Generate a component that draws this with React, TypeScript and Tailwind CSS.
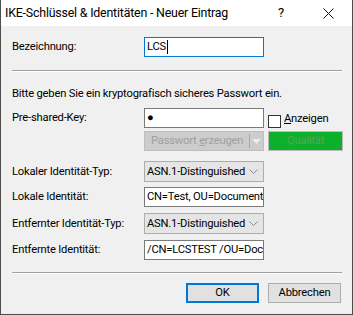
const Label = ({ children }: { children: React.ReactNode }) => (
  <div className="w-[132px] shrink-0">{children}</div>
);

const TextBox = ({ value, focused, cursor }: { value: string; focused?: boolean; cursor?: boolean }) => (
  <div
    className={
      "w-[120px] h-[20px] bg-white flex items-center px-[2px] overflow-hidden whitespace-nowrap " +
      (focused ? "border border-[#0078d7]" : "border border-[#7a7a7a]")
    }
  >
    <span>{value}</span>
    {cursor && <span className="w-[1px] h-[14px] bg-black ml-[1px]" />}
  </div>
);

const Select = ({ value }: { value: string }) => (
  <div className="w-[120px] h-[21px] bg-[#e5e5e5] border border-[#adadad] flex items-center pl-[2px] pr-[5px]">
    <span className="whitespace-nowrap">{value}</span>
    <svg className="ml-auto" width="9" height="6" viewBox="0 0 9 6">
      <path d="M0.5 0.5 L4.5 4.5 L8.5 0.5" fill="none" stroke="#8a8a8a" strokeWidth="1" />
    </svg>
  </div>
);

export default function App() {
  return (
    <div className="w-[353px] h-[315px] flex flex-col bg-[#f0f0f0] border-x border-b border-[#4d4d4d] text-[11.2px] leading-[16px] tracking-[-0.2px] text-black font-['Roboto','Liberation_Sans',sans-serif] overflow-hidden">
      {/* title bar */}
      <div className="h-[26px] shrink-0 bg-white flex items-center">
        <span className="ml-[4px] whitespace-nowrap text-[12.4px]">IKE-Schlüssel &amp; Identitäten - Neuer Eintrag</span>
        <span className="ml-auto mr-[39px] text-[13px]">?</span>
        <svg className="mr-[18px]" width="11" height="11" viewBox="0 0 11 11">
          <path d="M0.5 0.5 L10.5 10.5 M10.5 0.5 L0.5 10.5" stroke="#111" strokeWidth="1" />
        </svg>
      </div>

      <div className="flex flex-col pl-[11px]">
        <div className="flex items-center mt-[11px]">
          <Label>Bezeichnung:</Label>
          <TextBox value="LCS" focused cursor />
        </div>

        <div className="mt-[13px] w-[330px] h-[2px] border-t border-[#a0a0a0] border-b border-b-white" />

        <div className="mt-[14px] whitespace-nowrap">Bitte geben Sie ein kryptografisch sicheres Passwort ein.</div>

        <div className="flex items-center mt-[6px]">
          <Label>Pre-shared-Key:</Label>
          <TextBox value="●" />
          <div className="ml-[4px] mt-[6px] w-[13px] h-[13px] border border-[#333] bg-white" />
          <span className="ml-[3px] mt-[1px]">
            <span className="underline">A</span>nzeigen
          </span>
        </div>

        <div className="flex mt-[3px] ml-[132px]">
          <div className="w-[120px] h-[20px] bg-[#cccccc] border border-[#bfbfbf] flex items-center text-[#a0a0a0]">
            <span className="ml-[6px] whitespace-nowrap">
              Passwort <span className="underline">e</span>rzeugen
            </span>
            <div className="ml-auto w-[1px] h-[14px] bg-[#a8a8a8]" />
            <div className="w-[13px] flex justify-center">
              <svg width="9" height="5" viewBox="0 0 9 5">
                <path d="M0 0 L9 0 L4.5 5 Z" fill="#ececec" />
              </svg>
            </div>
          </div>
          <div className="ml-[4px] w-[75px] h-[20px] bg-[#0db02b] border border-[#bcbcbc] flex items-center justify-center text-[#5aa55a]">
            Qualität
          </div>
        </div>

        <div className="flex items-center mt-[10px]">
          <Label>Lokaler Identität-Typ:</Label>
          <Select value="ASN.1-Distinguished" />
        </div>

        <div className="flex items-center mt-[5px]">
          <Label>Lokale Identität:</Label>
          <TextBox value="CN=Test, OU=Documentation" />
        </div>

        <div className="flex items-center mt-[6px]">
          <Label>Entfernter Identität-Typ:</Label>
          <Select value="ASN.1-Distinguished" />
        </div>

        <div className="flex items-center mt-[6px]">
          <Label>Entfernte Identität:</Label>
          <TextBox value="/CN=LCSTEST /OU=Documentation" />
        </div>

        <div className="mt-[12px] w-[330px] h-[2px] border-t border-[#a0a0a0] border-b border-b-white" />

        <div className="flex justify-end gap-[9px] mt-[9px] pr-[11px]">
          <button className="w-[73px] h-[20px] bg-[#e1e1e1] border-2 border-[#0078d7] flex items-center justify-center">
            OK
          </button>
          <button className="w-[73px] h-[20px] bg-[#e1e1e1] border border-[#adadad] flex items-center justify-center">
            Abbrechen
          </button>
        </div>
      </div>
    </div>
  );
}
